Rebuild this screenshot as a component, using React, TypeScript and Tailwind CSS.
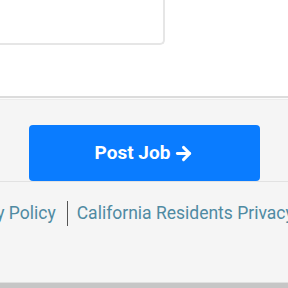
import { ArrowRight } from "lucide-react";

const App = () => {
  return (
    <div
      className="w-[288px] h-[288px] overflow-hidden flex flex-col bg-[#f5f5f5]"
      style={{ fontFamily: "Roboto, 'Liberation Sans', sans-serif" }}
    >
      {/* top form area */}
      <div className="h-[98px] bg-white border-b-2 border-[#dcdcdc] shrink-0">
        <div className="h-[45px] w-[165px] bg-white border-r-2 border-b-2 border-[#e6e6e6] rounded-br-[5px]" />
      </div>
      <div className="h-[2px] bg-[#fbfbfb] border-b border-[#ececec] shrink-0" />

      {/* submit */}
      <div className="pt-[25px] border-b border-[#e2e2e2] shrink-0">
        <button className="ml-[29px] w-[231px] h-[56px] rounded-[4px] bg-[#0a7cff] text-white font-bold text-[19px] flex items-center justify-center gap-[3px]">
          <span>Post Job</span>
          <ArrowRight className="w-[21px] h-[21px]" strokeWidth={3.4} />
        </button>
      </div>

      {/* footer links */}
      <div className="flex items-center whitespace-nowrap -ml-[52px] mt-[18px] text-[17.5px] text-[#4f8aa2] shrink-0">
        <span className="shrink-0">Privacy Policy</span>
        <span className="shrink-0 ml-[11px] mr-[9px] w-px h-[25px] bg-[#555]" />
        <span className="shrink-0">California Residents Privacy Notice</span>
      </div>

      <div className="flex-1" />
      <div className="h-[6px] bg-[#c6c6c6] border-t border-[#e0e0e0] shrink-0" />
    </div>
  );
};

export default App;
